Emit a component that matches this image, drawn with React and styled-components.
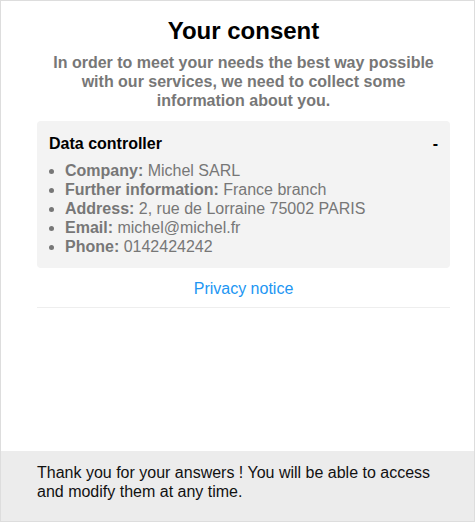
import React from 'react';
import styled, { createGlobalStyle } from 'styled-components';

const GlobalStyle = createGlobalStyle`
    html, body {
        margin: 0;
        padding: 0;
        background: #ffffff;
    }
    * {
        box-sizing: border-box;
    }
`;

const Frame = styled.div`
    width: 475px;
    height: 522px;
    border: 1px solid #dddddd;
    display: flex;
    flex-direction: column;
    font-family: "Liberation Sans", Arial, sans-serif;
    background: #ffffff;
`;

const Content = styled.div`
    flex: 1;
    padding: 16px 24px 0 36px;
`;

const Title = styled.h1`
    margin: 0;
    font-size: 24px;
    line-height: 28px;
    font-weight: bold;
    text-align: center;
    color: #000000;
`;

const Intro = styled.p`
    margin: 8px 0 0;
    font-size: 16px;
    line-height: 19px;
    font-weight: bold;
    text-align: center;
    color: #777777;
`;

const Panel = styled.section`
    margin-top: 11px;
    background: #f3f3f3;
    border-radius: 4px;
    padding: 13px 12px 12px;
`;

const PanelHead = styled.div`
    display: flex;
    justify-content: space-between;
    align-items: center;
    font-size: 16px;
    line-height: 19px;
    font-weight: bold;
    color: #000000;
    margin-bottom: 8px;
`;

const InfoList = styled.ul`
    margin: 0;
    padding-left: 16px;
    list-style: disc;
    color: #777777;
    font-size: 16px;
    line-height: 19px;
`;

const Label = styled.strong`
    font-weight: bold;
`;

const LinkRow = styled.div`
    margin-top: 11px;
    padding-bottom: 9px;
    border-bottom: 1px solid #eeeeee;
    text-align: center;
    font-size: 16px;
    line-height: 19px;
`;

const PrivacyLink = styled.a`
    color: #2196f3;
    text-decoration: none;
`;

const Footer = styled.footer`
    background: #ececec;
    padding: 12px 24px 20px 36px;
    font-size: 16px;
    line-height: 19px;
    color: #111111;
`;

const controller = [
    ['Company:', 'Michel SARL'],
    ['Further information:', 'France branch'],
    ['Address:', '2, rue de Lorraine 75002 PARIS'],
    ['Email:', 'michel@michel.fr'],
    ['Phone:', '0142424242'],
];

const App = () => {
    return (
        <>
            <GlobalStyle />
            <Frame>
                <Content>
                    <Title>Your consent</Title>
                    <Intro>
                        In order to meet your needs the best way possible with our services, we need to collect some information about you.
                    </Intro>
                    <Panel>
                        <PanelHead>
                            <span>Data controller</span>
                            <span>-</span>
                        </PanelHead>
                        <InfoList>
                            {controller.map(([label, value]) => (
                                <li key={label}>
                                    <Label>{label}</Label> {value}
                                </li>
                            ))}
                        </InfoList>
                    </Panel>
                    <LinkRow>
                        <PrivacyLink href="#">Privacy notice</PrivacyLink>
                    </LinkRow>
                </Content>
                <Footer>
                    Thank you for your answers ! You will be able to access and modify them at any time.
                </Footer>
            </Frame>
        </>
    );
};

export default App;
